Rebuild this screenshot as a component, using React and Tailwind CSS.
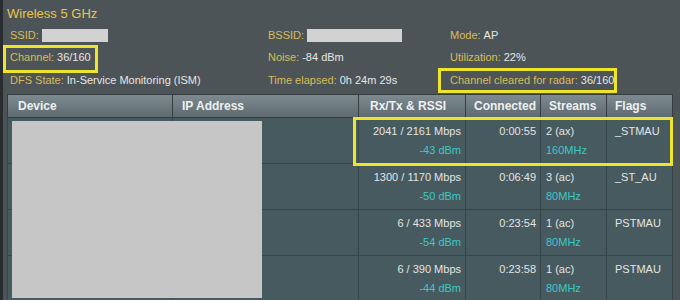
import React from 'react'

const info = [
  [
    { label: 'SSID', redact: 'w-[66px]' },
    { label: 'BSSID', redact: 'w-[95px]' },
    { label: 'Mode', value: 'AP' },
  ],
  [
    { label: 'Channel', value: '36/160' },
    { label: 'Noise', value: '-84 dBm' },
    { label: 'Utilization', value: '22%' },
  ],
  [
    { label: 'DFS State', value: 'In-Service Monitoring (ISM)' },
    { label: 'Time elapsed', value: '0h 24m 29s' },
    { label: 'Channel cleared for radar', value: '36/160' },
  ],
]

const rows = [
  { rate: '2041 / 2161 Mbps', rssi: '-43 dBm', conn: '0:00:55', streams: '2 (ax)', bw: '160MHz', flags: '_STMAU' },
  { rate: '1300 / 1170 Mbps', rssi: '-50 dBm', conn: '0:06:49', streams: '3 (ac)', bw: '80MHz', flags: '_ST_AU' },
  { rate: '6 / 433 Mbps', rssi: '-54 dBm', conn: '0:23:54', streams: '1 (ac)', bw: '80MHz', flags: 'PSTMAU' },
  { rate: '6 / 390 Mbps', rssi: '-44 dBm', conn: '0:23:58', streams: '1 (ac)', bw: '80MHz', flags: 'PSTMAU' },
]

const heights = ['h-[22px]', 'h-[23px]', 'h-[22px]']
const cols = ['w-[258px]', 'w-[182px]', 'flex-1']

const App = () => {
  return (
    <div className="relative w-[680px] h-[300px] overflow-hidden bg-[#4d5457] border-l-[3px] border-[#2a2d2f] font-['Liberation_Sans',Arial,sans-serif] text-[11px]">
      {/* Header info */}
      <div className="pt-[4px] pl-[4px]">
        <div className="h-[20px] flex items-center text-[13px] text-[#e8c64c]">Wireless 5 GHz</div>
        {info.map((line, i) => (
          <div key={i} className={`flex items-center pl-[3px] ${heights[i]}`}>
            {line.map((c, j) => (
              <div key={j} className={`${cols[j]} flex items-center whitespace-nowrap`}>
                <span className="text-[#d9bd57]">{c.label}:</span>
                {c.redact ? (
                  <span className={`inline-block ml-[3px] h-[13px] bg-[#d2d2d2] ${c.redact}`} />
                ) : (
                  <span className="ml-[3px] text-[#e6e6e6]">{c.value}</span>
                )}
              </div>
            ))}
          </div>
        ))}
      </div>

      {/* Client table */}
      <table className="mt-[3px] ml-[4px] w-[665px] border-collapse table-fixed">
        <colgroup>
          <col className="w-[165px]" />
          <col className="w-[186px]" />
          <col className="w-[107px]" />
          <col className="w-[75px]" />
          <col className="w-[66px]" />
          <col className="w-[66px]" />
        </colgroup>
        <thead>
          <tr className="h-[23px] bg-gradient-to-b from-[#7d8a90] to-[#5d696f] text-[12px] font-bold text-[#eef1f2]">
            <th className="border border-[#363d40] text-left pl-[10px]">Device</th>
            <th className="border border-[#363d40] text-left pl-[9px]">IP Address</th>
            <th className="border border-[#363d40] text-left pl-[11px]">Rx/Tx &amp; RSSI</th>
            <th className="border border-[#363d40] text-left pl-[8px]">Connected</th>
            <th className="border border-[#363d40] text-left pl-[8px]">Streams</th>
            <th className="border border-[#363d40] text-left pl-[8px]">Flags</th>
          </tr>
        </thead>
        <tbody className="bg-[#475a5f] text-[#e4e4e4]">
          {rows.map((r, i) => (
            <tr key={i} className="h-[46px] align-top">
              <td className="border border-[#37454a]" />
              <td className="border border-[#37454a]" />
              <td className="border border-[#37454a] text-right pr-[4px] pt-[7px]">
                <div className="leading-[13px]">{r.rate}</div>
                <div className="leading-[13px] mt-[6px] text-[#3cc9c9]">{r.rssi}</div>
              </td>
              <td className="border border-[#37454a] text-right pr-[4px] pt-[7px]">
                <div className="leading-[13px]">{r.conn}</div>
              </td>
              <td className="border border-[#37454a] pl-[5px] pt-[7px]">
                <div className="leading-[13px]">{r.streams}</div>
                <div className="leading-[13px] mt-[6px] text-[#3cc9c9]">{r.bw}</div>
              </td>
              <td className="border border-[#37454a] pl-[8px] pt-[7px]">
                <div className="leading-[13px]">{r.flags}</div>
              </td>
            </tr>
          ))}
        </tbody>
      </table>

      {/* Redaction over device names and addresses */}
      <div className="absolute left-[9px] top-[121px] w-[250px] h-[177px] bg-[#c6c6c6]" />

      {/* Yellow highlight annotations */}
      <div className="absolute left-0 top-[45px] w-[95px] h-[28px] border-[3px] border-[#ede52a] pointer-events-none" />
      <div className="absolute left-[435px] top-[68px] w-[179px] h-[25px] border-[3px] border-[#ede52a] pointer-events-none" />
      <div className="absolute left-[350px] top-[117px] w-[320px] h-[49px] border-[3px] border-[#ede52a] pointer-events-none" />
    </div>
  )
}

export default App
